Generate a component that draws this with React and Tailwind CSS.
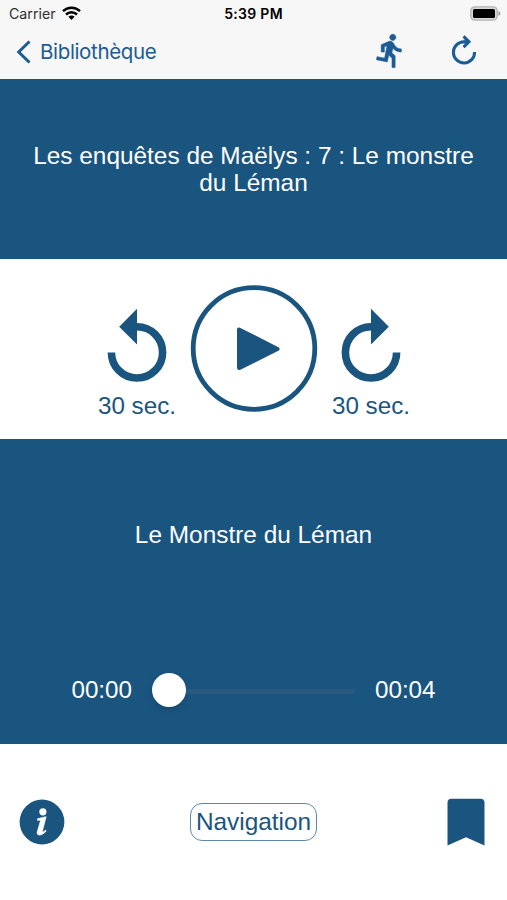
import { useState } from "react";

const TITLE = "Les enquêtes de Maëlys : 7 : Le monstre du Léman";
const CHAPTER = "Le Monstre du Léman";

export default function App() {
  return (
    <div className="flex h-[900px] w-[507px] flex-col overflow-hidden bg-white font-['Liberation_Sans',Arial,sans-serif] text-[#1a5580]">
      <header className="h-[79px] shrink-0 bg-[#f7f7f7] font-[Inter,sans-serif]">
        <StatusBar />
        <NavBar />
      </header>

      <section className="flex h-[180px] shrink-0 items-center justify-center bg-[#1a5580] px-6">
        <h1 className="text-center text-[24.4px] leading-[27px] text-white">
          {TITLE}
        </h1>
      </section>

      <Controls />

      <section className="h-[305px] shrink-0 bg-[#1a5580] text-white">
        <h2 className="pt-[82px] text-center text-[24.4px] leading-[27px]">
          {CHAPTER}
        </h2>
        <Progress />
      </section>

      <footer className="flex grow items-center justify-between pl-[19px] pr-[22px]">
        <button type="button" aria-label="Informations">
          <InfoIcon />
        </button>
        <button
          type="button"
          className="mr-[5px] h-[38px] w-[127px] rounded-[12px] border border-[#5f88a8] text-[24.4px] leading-none"
        >
          Navigation
        </button>
        <button type="button" aria-label="Signet">
          <BookmarkIcon />
        </button>
      </footer>
    </div>
  );
}

function StatusBar() {
  return (
    <div className="grid h-[27px] grid-cols-3 items-center text-[13.5px] text-black">
      <div className="flex items-center gap-[6px] pl-[9px] text-[#303030]">
        <span className="text-[14.2px]">Carrier</span>
        <WifiIcon />
      </div>
      <span className="text-center text-[14px] font-semibold tracking-[0.3px]">5:39 PM</span>
      <div className="flex justify-end pr-[6px]">
        <BatteryIcon />
      </div>
    </div>
  );
}

function NavBar() {
  return (
    <nav className="flex h-[50px] items-center text-[#1b5c94]">
      <button type="button" className="flex items-center pl-4">
        <svg width="16" height="24" viewBox="0 0 16 24" fill="none" stroke="currentColor" strokeWidth="3">
          <path d="M13.5 1.5 2.7 12l10.8 10.5" />
        </svg>
        <span className="ml-2 text-[20.5px] tracking-[-0.35px]">
          Bibliothèque
        </span>
      </button>
      <button type="button" aria-label="Vitesse" className="mb-[4px] ml-auto mr-[42px]">
        <RunIcon />
      </button>
      <button type="button" aria-label="Actualiser" className="mb-[6px] mr-[30px]">
        <RefreshIcon />
      </button>
    </nav>
  );
}

function Controls() {
  const [playing, setPlaying] = useState(false);

  return (
    <section className="flex h-[180px] shrink-0 justify-center gap-[14.5px] pl-px">
      <button type="button" className="flex w-[78px] flex-col items-center pt-[49px]">
        <BackIcon />
        <span className="mt-[10px] whitespace-nowrap text-[24.2px] leading-[27px]">30 sec.</span>
      </button>
      <button
        type="button"
        aria-label="Lecture"
        aria-pressed={playing}
        onClick={() => setPlaying(!playing)}
        className="mt-[26px] h-[127px] w-[127px]"
      >
        <PlayIcon />
      </button>
      <button type="button" className="flex w-[78px] flex-col items-center pt-[49px]">
        <ForwardIcon />
        <span className="mt-[10px] whitespace-nowrap text-[24.2px] leading-[27px]">30 sec.</span>
      </button>
    </section>
  );
}

function Progress() {
  return (
    <div className="mt-[125px] flex items-center justify-center text-[24.2px] leading-[34px]">
      <span>00:00</span>
      <div className="ml-[20px] mr-[20px] flex w-[203px] items-center">
        <span className="size-[34px] shrink-0 rounded-full bg-white shadow-[0_3px_8px_rgba(0,0,0,0.15)]" />
        <span className="mt-[3px] h-[5px] grow rounded-r-full bg-[#2a597f]" />
      </div>
      <span>00:04</span>
    </div>
  );
}

function WifiIcon() {
  return (
    <svg width="19" height="14" viewBox="0 0 19 14" fill="none" stroke="black" strokeWidth="2.5">
      <path d="M1 5.2c4.8-4.6 12.2-4.6 17 0" />
      <path d="M4 8.5c3.1-3 7.9-3 11 0" />
      <path d="M6.4 10.8c1.8-1.6 4.4-1.6 6.2 0L9.5 14z" fill="black" stroke="none" />
    </svg>
  );
}

function BatteryIcon() {
  return (
    <svg width="31" height="15" viewBox="0 0 31 15">
      <rect x="0.8" y="0.8" width="26.4" height="13.4" rx="4" fill="#d8d8d8" stroke="#b4b4b4" strokeWidth="1.3" />
      <rect x="3" y="3" width="22" height="9" rx="1.5" fill="black" />
      <path d="M28.5 5c2.4.7 2.4 4.3 0 5z" fill="#999" />
    </svg>
  );
}

function RunIcon() {
  return (
    <svg
      width="37"
      height="37"
      viewBox="0 0 24 24"
      fill="currentColor"
      stroke="currentColor"
      strokeWidth="0.4"
    >
      <path d="M13.49 5.48c1.1 0 2-.9 2-2s-.9-2-2-2-2 .9-2 2 .9 2 2 2zm-3.6 13.9 1-4.4 2.1 2v6h2v-7.5l-2.1-2 .6-3c1.3 1.5 3.3 2.5 5.5 2.5v-2c-1.9 0-3.5-1-4.3-2.4l-1-1.6c-.4-.6-1-1-1.7-1-.3 0-.5.1-.8.1l-5.2 2.2v4.7h2v-3.4l1.8-.7-1.6 8.1-4.9-1-.4 2 7 1.4z" />
    </svg>
  );
}

function RefreshIcon() {
  return (
    <svg width="26" height="32" viewBox="0 0 26 32" fill="none" stroke="currentColor" strokeWidth="3">
      <path d="M17.5 8.7H13A10.6 10.6 0 1 0 23.6 19" />
      <path d="m12.6 3.2 5.4 5.5-5.4 5.5" fill="currentColor" fillOpacity="0.5" />
    </svg>
  );
}

function BackIcon() {
  return (
    <svg width="60" height="74" viewBox="0 0 60 74">
      <path d="M30 18.8A25.6 25.6 0 1 1 4.4 44.4" fill="none" stroke="currentColor" strokeWidth="7.6" />
      <path d="M30 .7V36.5L12.2 18.8z" fill="currentColor" />
    </svg>
  );
}

function ForwardIcon() {
  return (
    <svg width="60" height="74" viewBox="0 0 60 74">
      <path d="M30 18.8A25.6 25.6 0 1 0 55.6 44.4" fill="none" stroke="currentColor" strokeWidth="7.6" />
      <path d="M30 .7V36.5L47.8 18.8z" fill="currentColor" />
    </svg>
  );
}

function PlayIcon() {
  return (
    <svg width="127" height="127" viewBox="0.5 0 127 127" className="overflow-visible">
      <circle cx="63.5" cy="63.5" r="60.8" fill="none" stroke="currentColor" strokeWidth="4.8" />
      <path
        d="M48.5 44.5v38.6L87 64z"
        fill="currentColor"
        stroke="currentColor"
        strokeWidth="4"
        strokeLinejoin="round"
      />
    </svg>
  );
}

function InfoIcon() {
  return (
    <svg width="46" height="46" viewBox="0 0 46 46">
      <circle cx="23" cy="23" r="22.4" fill="currentColor" />
      <circle cx="23.9" cy="12.8" r="3.6" fill="white" />
      <path
        d="M18.5 19.8c2.7-.8 5.5-1.7 8.7-2.1l-4 15.2c.9.3 2.1-.8 3.2-1.8l.8.9c-2 2.5-4.5 4-6.7 4.1-2.1.1-2.8-1.4-2.2-3.5l3.2-11.1c-.8-.5-1.7-.3-3 .1z"
        fill="white"
        stroke="white"
        strokeWidth="0.6"
      />
    </svg>
  );
}

function BookmarkIcon() {
  return (
    <svg width="38" height="48" viewBox="0 0 38 48" fill="currentColor">
      <path d="M4.5.8h29a4 4 0 0 1 4 4v42.7L19 39.2.5 47.5V4.8a4 4 0 0 1 4-4z" />
    </svg>
  );
}
